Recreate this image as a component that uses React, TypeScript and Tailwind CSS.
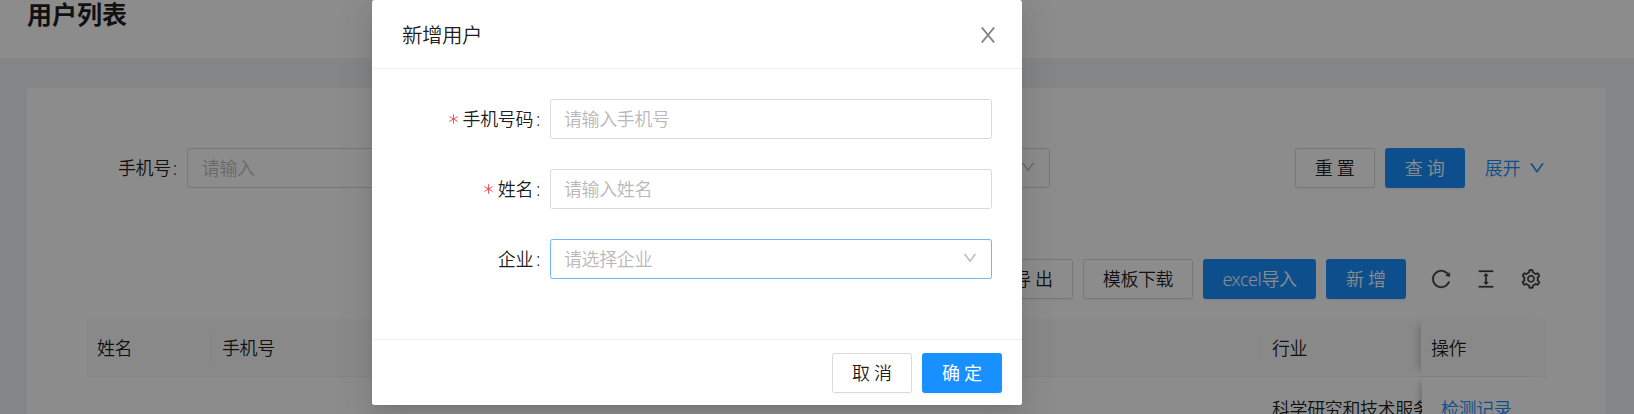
import type { ReactNode } from 'react';
import {
  AiOutlineColumnHeight,
  AiOutlineDown,
  AiOutlineReload,
  AiOutlineSetting,
} from 'react-icons/ai';

function Button({ children, primary, width }: { children: ReactNode; primary?: boolean; width: string }) {
  const tone = primary
    ? 'border-[#1890ff] bg-[#1890ff] text-white shadow-[0_2px_0_rgba(0,0,0,0.045)]'
    : 'border-[#d9d9d9] bg-white text-black/90 shadow-[0_2px_0_rgba(0,0,0,0.015)]';
  return (
    <button
      className={`flex h-10 shrink-0 items-center justify-center whitespace-nowrap rounded-[2.5px] border ${tone} ${width}`}
    >
      {children}
    </button>
  );
}

function Spaced({ text }: { text: string }) {
  return <span className="-mr-[4px] tracking-[4px]">{text}</span>;
}

function Star() {
  return (
    <svg className="mb-px mr-[5px] text-[#ff4d4f]" width="9" height="10" viewBox="0 0 9 10" fill="none" stroke="currentColor" strokeWidth="1">
      <path d="M4.5 0.3v9.4M0.4 2.6l8.2 4.8M8.6 2.6L0.4 7.4" />
    </svg>
  );
}

function CloseIcon() {
  return (
    <svg className="mr-[3px] mt-px text-black/50" width="14" height="16" viewBox="0 0 14 16" fill="none" stroke="currentColor" strokeWidth="1.8">
      <path d="M0.8 0.5L13.2 15.5M13.2 0.5L0.8 15.5" />
    </svg>
  );
}

function FormRow({ label, required, children }: { label: string; required?: boolean; children: ReactNode }) {
  return (
    <div className="flex h-10 items-center">
      <div className="flex w-[148px] items-center justify-end">
        {required && <Star />}
        <span>{label}</span>
        <span className="ml-[3px] w-[5px]">:</span>
      </div>
      <div className="ml-[9px] flex h-10 w-[442px]">{children}</div>
    </div>
  );
}

function UserListPage() {
  return (
    <div className="flex h-full flex-col bg-[#f0f2f5]">
      <header className="h-[58px] shrink-0 bg-white pl-[27px]">
        <h1 className="h-[30px] text-[25px] font-bold leading-[28px] tracking-normal">用户列表</h1>
      </header>
      <main className="ml-[27px] mr-7 mt-[30px] flex-1 overflow-hidden rounded-t-[2.5px] bg-white px-[60px] pt-[60px]">
        <div className="flex h-10 items-center">
          <span className="ml-[31px]">手机号</span>
          <span className="ml-[2px] w-[5px]">:</span>
          <div className="ml-[9px] flex h-10 w-[300px] items-center rounded-[2.5px] border border-[#d9d9d9] pl-[14px] text-[#bfbfbf]">
            请输入
          </div>
          <div className="ml-[183px] flex h-10 w-[380px] items-center justify-end rounded-[2.5px] border border-[#d9d9d9] pr-[13px] text-[#bfbfbf]">
            <AiOutlineDown size={16} strokeWidth={14} className="-mt-[2px]" />
          </div>
          <div className="ml-auto flex items-center gap-[10px]">
            <Button width="w-20"><Spaced text="重置" /></Button>
            <Button width="w-20" primary><Spaced text="查询" /></Button>
            <a className="ml-[10px] flex items-center gap-[8px] text-[#1890ff]">
              展开
              <AiOutlineDown size={18} strokeWidth={14} className="-mt-px" />
            </a>
          </div>
        </div>

        <div className="mt-[71px] flex h-10 items-center justify-end gap-[10px]">
          <Button width="w-20"><Spaced text="导出" /></Button>
          <Button width="w-[110px]">模板下载</Button>
          <Button width="w-[113px]" primary>excel导入</Button>
          <Button width="w-20" primary><Spaced text="新增" /></Button>
          <div className="ml-[14px] mr-1 flex gap-[23px] text-black/75">
            <AiOutlineReload size={22} strokeWidth={12} />
            <AiOutlineColumnHeight size={22} strokeWidth={12} />
            <AiOutlineSetting size={22} strokeWidth={12} />
          </div>
        </div>

        <div className="mt-5 flex h-[58px] items-center border-b border-[#f0f0f0] bg-[#fafafa]">
          <div className="flex h-7 w-[125px] items-center border-r border-[#f0f0f0] pl-[10px] pt-[2px]">姓名</div>
          <div className="flex h-7 w-[1050px] items-center border-r border-[#f0f0f0] pl-[10px] pt-[2px]">手机号</div>
          <div className="w-[159px] pl-[10px] pt-[2px]">行业</div>
          <div className="flex h-full flex-1 items-center pl-[10px] pt-[2px] shadow-[-8px_0_8px_-6px_rgba(0,0,0,0.22)]">操作</div>
        </div>
        <div className="flex h-[64px] items-center">
          <div className="ml-[1175px] w-[160px] overflow-hidden whitespace-nowrap pl-[10px]">科学研究和技术服务业</div>
          <div className="flex h-full flex-1 items-center bg-white pl-[19px] text-[#1890ff] shadow-[-8px_0_8px_-6px_rgba(0,0,0,0.22)]">
            检测记录
          </div>
        </div>
      </main>
    </div>
  );
}

function CreateUserModal() {
  return (
    <section className="absolute left-[372px] top-0 flex h-[405px] w-[650px] flex-col rounded-[2.5px] bg-white shadow-[0_4px_8px_-5px_rgba(0,0,0,0.12),0_8px_20px_rgba(0,0,0,0.08),0_11px_35px_10px_rgba(0,0,0,0.05)]">
      <header className="flex h-[69px] items-center justify-between border-b border-[#f0f0f0] pl-[30px] pr-6">
        <h2 className="pt-[2px] text-[20.5px] tracking-[-0.5px]">新增用户</h2>
        <CloseIcon />
      </header>
      <div className="flex flex-1 flex-col gap-[30px] pl-[21px] pt-[30px]">
        <FormRow label="手机号码" required>
          <input className="w-full rounded-[2.5px] border border-[#d9d9d9] px-[13px] outline-none placeholder:text-[#b9b9b9]" placeholder="请输入手机号" />
        </FormRow>
        <FormRow label="姓名" required>
          <input className="w-full rounded-[2.5px] border border-[#d9d9d9] px-[13px] outline-none placeholder:text-[#b9b9b9]" placeholder="请输入姓名" />
        </FormRow>
        <FormRow label="企业">
          <div className="flex w-full items-center justify-between rounded-[2.5px] border border-[#70b6f0] px-[13px] text-[#b9b9b9]">
            请选择企业
            <AiOutlineDown size={16} strokeWidth={14} className="-mt-[2px]" />
          </div>
        </FormRow>
      </div>
      <footer className="flex h-[66px] items-center justify-end gap-[10px] border-t border-[#f0f0f0] pr-5 pt-px">
        <Button width="w-20"><Spaced text="取消" /></Button>
        <Button width="w-20" primary><span className="font-normal"><Spaced text="确定" /></span></Button>
      </footer>
    </section>
  );
}

export default function App() {
  return (
    <div className="relative h-[414px] w-[1634px] overflow-hidden font-['Noto_Sans','Noto_Sans_CJK_SC',sans-serif] text-[18px] font-[350] leading-[27px] tracking-[-0.4px] text-black/90">
      <UserListPage />
      <div className="absolute inset-0 bg-black/45" />
      <CreateUserModal />
    </div>
  );
}
